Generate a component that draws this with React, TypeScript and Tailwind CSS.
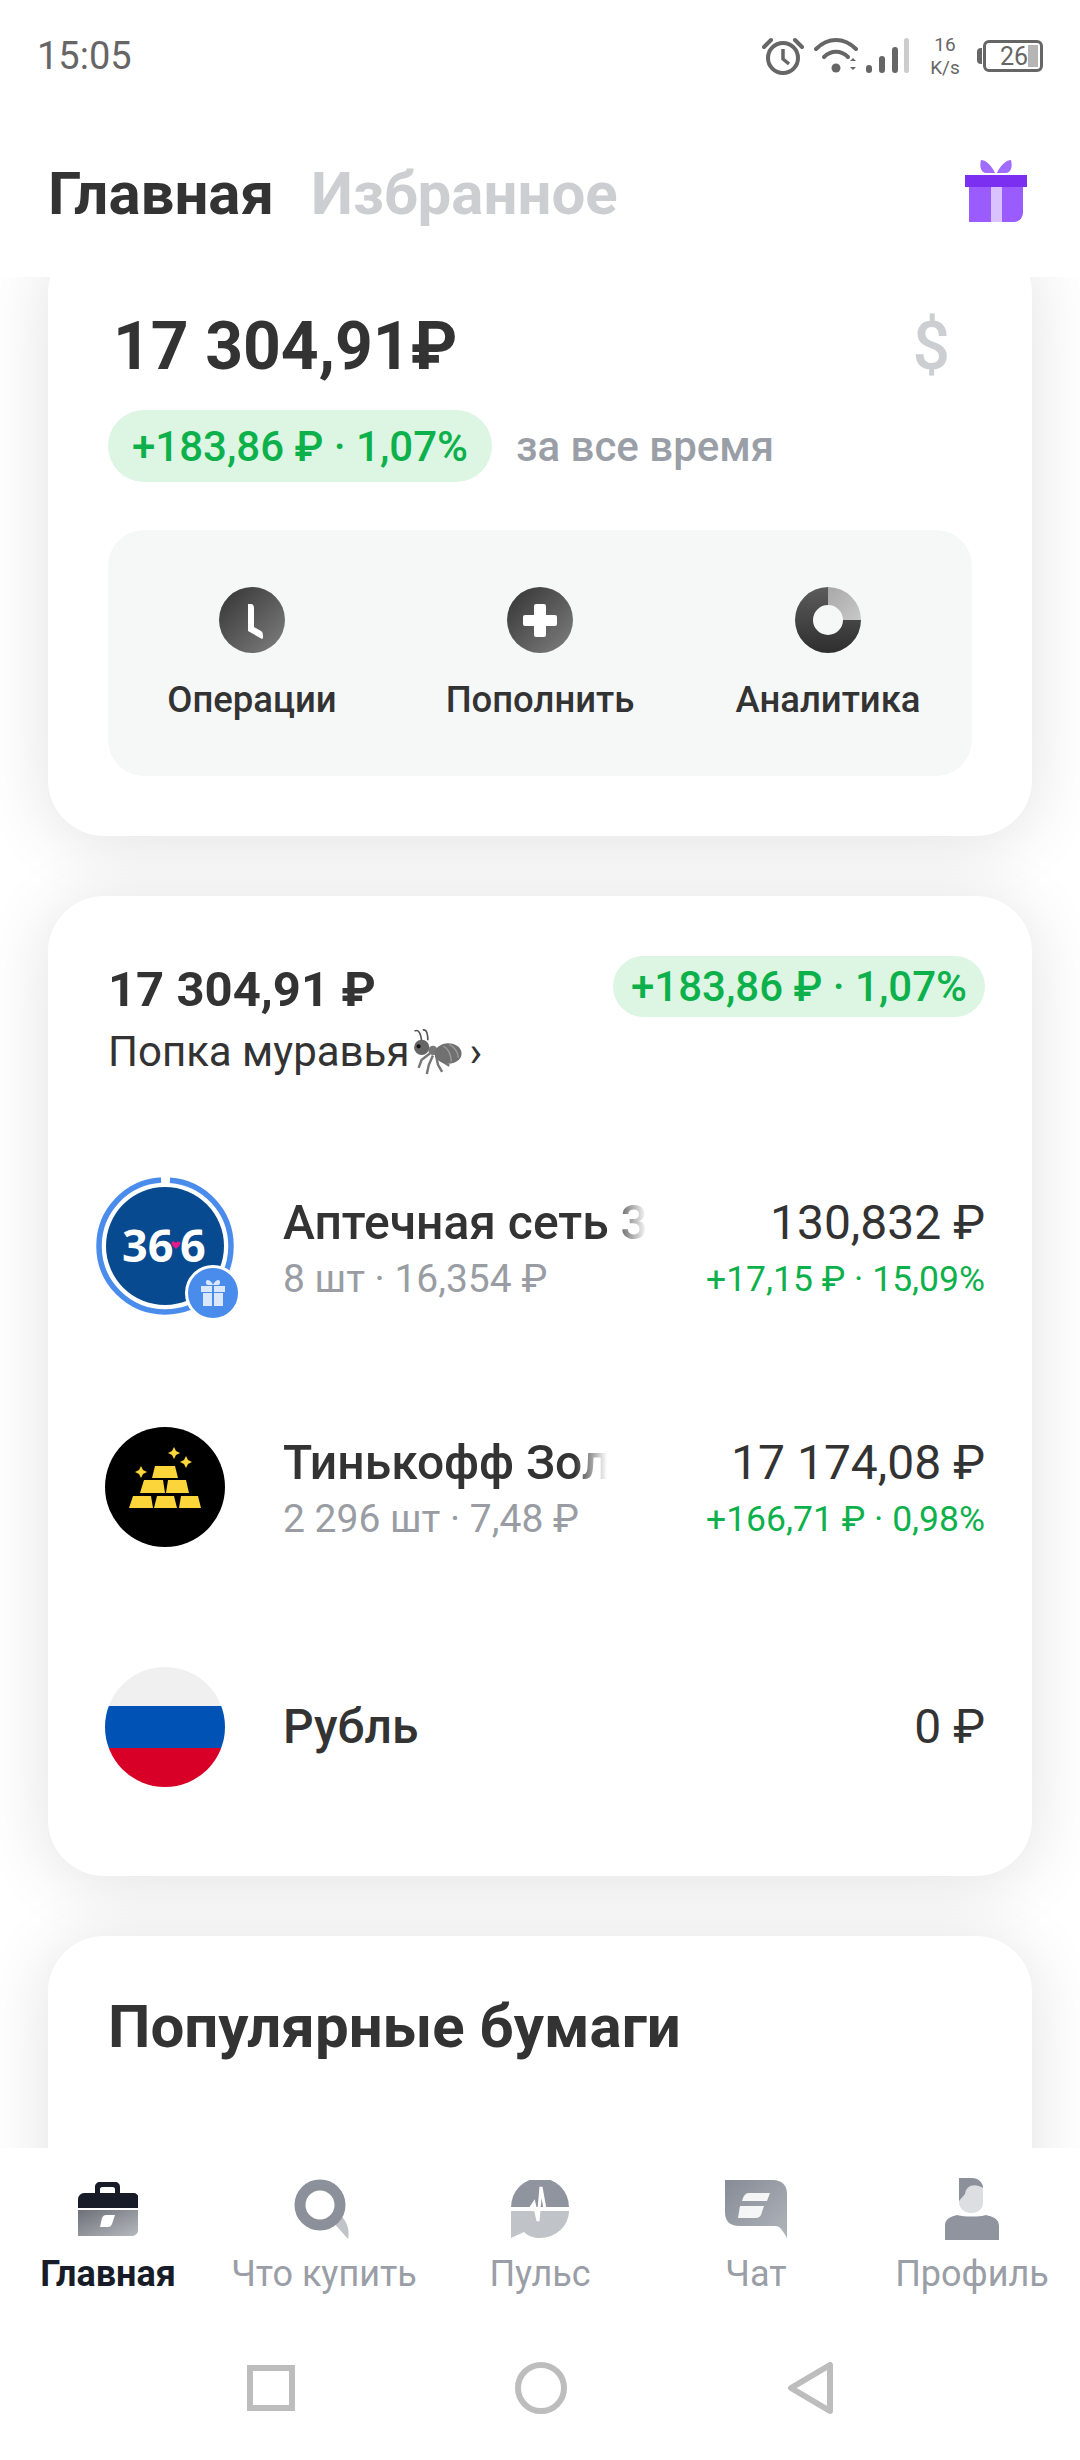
import React from "react";

function Alarm() {
  return (
    <svg width="42" height="40" viewBox="0 0 42 40" fill="none" stroke="#666" strokeWidth="4">
      <circle cx="21" cy="22" r="15" />
      <path d="M21 13v10l6 5" strokeWidth="3.5" />
      <path d="M2 11 9 4M40 11l-7-7" strokeLinecap="round" />
    </svg>
  );
}

function Wifi() {
  return (
    <svg width="96" height="38" viewBox="0 0 96 38" fill="none">
      <path d="M2 12C14 0 30 0 42 12" stroke="#666" strokeWidth="4" strokeLinecap="round" />
      <path d="M10 20c7-7 17-7 24 0" stroke="#666" strokeWidth="4" strokeLinecap="round" />
      <circle cx="22" cy="31" r="4.500" fill="#666" />
      <path d="M36 24l3-3 3 3zM36 30l3 3 3-3z" fill="#666" />
      <rect x="52" y="28" width="6" height="8" rx="3" fill="#666" />
      <rect x="65" y="19" width="6" height="17" rx="3" fill="#666" />
      <rect x="78" y="10" width="6" height="26" rx="3" fill="#666" />
      <rect x="90" y="1" width="5" height="35" rx="2.500" fill="#ccc" />
    </svg>
  );
}

function Gift() {
  return (
    <svg width="62" height="62" viewBox="0 0 62 62">
      <path d="M16 0c4 0 10 4 14 13h-9C17 13 14 8 16 0zM46 0c-4 0-10 4-14 13h9c4 0 7-5 5-13z" fill="#a06bff" />
      <path d="M4 26h54v26c0 6-4 10-9 10H4z" fill="#9b5cff" />
      <rect x="26" y="26" width="11" height="36" fill="#d9c2ff" />
      <rect x="0" y="15" width="62" height="12" fill="#7b2ff0" />
    </svg>
  );
}

function ClockBtn() {
  return (
    <svg width="66" height="66" viewBox="0 0 66 66">
      <defs>
        <linearGradient id="dk" x1="0" y1="0" x2="1" y2="1">
          <stop offset="0" stopColor="#333" />
          <stop offset="1" stopColor="#808080" />
        </linearGradient>
      </defs>
      <circle cx="33" cy="33" r="33" fill="url(#dk)" />
      <path d="M29 17h3c2 0 3 2 3 4v19l7 4c2 1 2 4 2 7l-1 1-14-8z" fill="#fff" />
    </svg>
  );
}

function PlusBtn() {
  return (
    <svg width="66" height="66" viewBox="0 0 66 66">
      <circle cx="33" cy="33" r="33" fill="url(#dk)" />
      <path d="M29 17h8a2 2 0 0 1 2 2v9h9a2 2 0 0 1 2 2v7a2 2 0 0 1-2 2h-9v9a2 2 0 0 1-2 2h-8a2 2 0 0 1-2-2v-9h-9a2 2 0 0 1-2-2v-7a2 2 0 0 1 2-2h9v-9a2 2 0 0 1 2-2z" fill="#fff" />
    </svg>
  );
}

function DonutBtn() {
  return (
    <svg width="66" height="66" viewBox="0 0 66 66">
      <defs>
        <linearGradient id="dn" x1="0" y1="1" x2="0" y2="0">
          <stop offset="0" stopColor="#2e2e2e" />
          <stop offset="1" stopColor="#5c5c5c" />
        </linearGradient>
        <linearGradient id="dl" x1="0" y1="0" x2="1" y2="1">
          <stop offset="0" stopColor="#a8a8a8" />
          <stop offset="1" stopColor="#c8c8c8" />
        </linearGradient>
      </defs>
      <path fillRule="evenodd" d="M33 0v18a15 15 0 1 0 15 15h18A33 33 0 1 1 33 0z" fill="url(#dn)" />
      <path d="M33 0a33 33 0 0 1 33 33H48a15 15 0 0 0-15-15z" fill="url(#dl)" />
    </svg>
  );
}

function Ant() {
  return (
    <svg width="54" height="47" viewBox="0 0 52 46" fill="none">
      <path d="M5 2c4-2 6 2 7 10M13 1c4-1 5 4 5 10" stroke="#555" strokeWidth="1.600" />
      <path d="M20 24 12 30l-3 8M23 26l-4 9-2 9M26 26l2 9 4 7M25 24l8 8 6 4" stroke="#777" strokeWidth="2.400" />
      <circle cx="12" cy="18" r="7.500" fill="#666" />
      <circle cx="9" cy="17" r="2" fill="#111" />
      <circle cx="23" cy="21" r="4.500" fill="#777" />
      <ellipse cx="38" cy="24" rx="13" ry="10" fill="#707070" />
      <path d="M33 17c4 1 8 8 8 15M39 15c4 2 8 7 9 13" stroke="#999" strokeWidth="1.500" />
    </svg>
  );
}

function PharmacyLogo() {
  return (
    <div className="relative h-[140px] w-[140px] shrink-0">
      <svg width="140" height="140" viewBox="0 0 140 140">
        <circle cx="69" cy="69" r="66" fill="none" stroke="#4a8ceb" strokeWidth="5.500" strokeDasharray="405 10" strokeDashoffset="-5" transform="rotate(-90 69 69)" />
        <circle cx="69" cy="69" r="59" fill="#074a8f" />
        <text x="26" y="85" fill="#fff" fontSize="45" fontWeight="700" fontFamily="'Open Sans', sans-serif">36</text>
        <text x="84" y="85" fill="#fff" fontSize="45" fontWeight="700" fontFamily="'Open Sans', sans-serif">6</text>
        <path d="M80 66c-2-3-6-1-4 2l4 4 4-4c2-3-2-5-4-2z" fill="#e8198b" />
      </svg>
      <div className="absolute right-[-5px] bottom-[-4px] flex h-[56px] w-[56px] items-center justify-center rounded-full border-[3px] border-white bg-[#4a8ceb]">
        <svg width="28" height="28" viewBox="0 0 28 28">
          <path d="M8 1c3 0 5 2 6 5h-5C7 6 6 3 8 1zM20 1c-3 0-5 2-6 5h5c2 0 3-3 1-5z" fill="#dbe7fb" />
          <path d="M2 7h11v6H2zM15 7h11v6H15zM4 14h9v13H4zM15 14h9v13h-9z" fill="#dbe7fb" />
        </svg>
      </div>
    </div>
  );
}

function GoldLogo() {
  return (
    <svg width="120" height="120" viewBox="0 0 120 120" className="shrink-0">
      <circle cx="60" cy="60" r="60" fill="#000" />
      <g fill="#fbd53a">
        <path d="M50 39h20l3 12H47z" />
        <path d="M39 53h19l2 13H35zM63 53h18l3 13H61z" />
        <path d="M28 69h18l2 12H24zM52 69h17l3 12H49zM76 69h17l3 12H74z" />
        <path d="M69 20l2 4 4 2-4 2-2 4-2-4-4-2 4-2z" />
        <path d="M81 29l2 4 4 2-4 2-2 4-2-4-4-2 4-2z" />
        <path d="M36 39l2 4 4 2-4 2-2 4-2-4-4-2 4-2z" />
      </g>
    </svg>
  );
}

function FlagLogo() {
  return (
    <div className="flex h-[120px] w-[120px] shrink-0 flex-col overflow-hidden rounded-full">
      <div className="h-[39px] bg-[#f0f0f0]" />
      <div className="h-[42px] bg-[#0052b4]" />
      <div className="h-[39px] bg-[#d80027]" />
    </div>
  );
}

function NavIcons({ name }: { name: string }) {
  if (name === "home") {
    return (
      <svg width="60" height="60" viewBox="0 0 60 60">
        <defs>
          <linearGradient id="hb" x1="0" y1="0" x2="1" y2="1">
            <stop offset="0" stopColor="#6d7078" />
            <stop offset="1" stopColor="#b5b8bd" />
          </linearGradient>
          <linearGradient id="gr" x1="0" y1="0" x2="1" y2="1">
            <stop offset="0" stopColor="#868b96" />
            <stop offset="1" stopColor="#b0b4ba" />
          </linearGradient>
        </defs>
        <path d="M17 14V8c0-3 2-5 5-5h15c3 0 5 2 5 5v6h-5V10c0-1-1-2-2-2H24c-1 0-2 1-2 2v4z" fill="#171c28" />
        <path d="M6 14h50c2 0 4 2 4 3v12H0V20c0-3 3-6 6-6z" fill="#171c28" />
        <path d="M0 31h60v20c0 4-3 6-7 6H0z" fill="url(#hb)" />
        <path d="M24 39c1-2 2-3 4-3h9l-3 9c-1 2-2 3-4 3h-8z" fill="#fff" />
      </svg>
    );
  }
  if (name === "search") {
    return (
      <svg width="60" height="60" viewBox="0 0 60 60">
        <path d="M38 42l8-7c7 8 10 15 8 25z" fill="#c0c3c8" />
        <circle cx="26" cy="26" r="20" fill="none" stroke="#8b909b" strokeWidth="11" />
      </svg>
    );
  }
  if (name === "pulse") {
    return (
      <svg width="58" height="58" viewBox="0 0 58 58">
        <path d="M0 27a29 29 0 0 1 58 0z" fill="#8f949e" />
        <path d="M0 31h58a29 27 0 0 1-29 27c-6 0-12-2-16-6L0 58z" fill="#c0c3c7" />
        <path d="M0 29h19l4-6 4 18 3-34 4 22h24" fill="none" stroke="#fff" strokeWidth="3" />
      </svg>
    );
  }
  if (name === "chat") {
    return (
      <svg width="62" height="58" viewBox="0 0 62 58">
        <path d="M0 0h48c8 0 14 5 14 13v45c-4-7-7-12-11-12H14C5 46 0 41 0 32z" fill="url(#gr)" />
        <path d="M18 18c1-3 3-5 6-5h21l-3 8H17zM15 26h24l-3 9c-1 2-3 3-5 3H13z" fill="#fff" opacity=".9" />
      </svg>
    );
  }
  return (
    <svg width="54" height="62" viewBox="0 0 54 62">
      <path d="M14 0h12c8 0 12 5 12 12v13c0 6-5 10-12 10S14 30 14 24z" fill="#dcdee1" />
      <path d="M14 0h12c8 0 12 5 12 10-8-5-17-3-18 6l-6 7z" fill="#8b909b" />
      <path d="M0 62V48c0-10 11-10 12-11 8 2 22 2 29 0 1 1 13 1 13 11v14z" fill="#8f949e" />
    </svg>
  );
}

const tabs = [
  { key: "home", label: "Главная", active: true },
  { key: "search", label: "Что купить" },
  { key: "pulse", label: "Пульс" },
  { key: "chat", label: "Чат" },
  { key: "profile", label: "Профиль" },
];

const actions = [
  { label: "Операции", icon: <ClockBtn /> },
  { label: "Пополнить", icon: <PlusBtn /> },
  { label: "Аналитика", icon: <DonutBtn /> },
];

export default function App() {
  return (
    <div className="flex h-[2460px] w-[1080px] flex-col overflow-hidden bg-white font-['Roboto',sans-serif] text-[#333]">
      {/* status bar */}
      <div className="flex h-[110px] shrink-0 items-center justify-between px-[37px] pt-[2px]">
        <span className="text-[38px] leading-none text-[#666]">15:05</span>
        <div className="ml-auto flex items-center">
          <Alarm />
          <div className="ml-[10px]"><Wifi /></div>
          <div className="ml-[17px] flex w-[36px] flex-col items-center text-[19px] leading-[23px] text-[#666]">
            <span>16</span>
            <span>K/s</span>
          </div>
          <div className="ml-[14px] flex items-center">
            <div className="h-[16px] w-[5px] rounded-l-sm bg-[#666]" />
            <div className="ml-[1px] flex h-[32px] w-[60px] items-center justify-end rounded-[6px] border-[3px] border-[#666] pr-[2px] text-[25px] leading-none text-[#666]">
              <span>26</span>
              <div className="h-[22px] w-[10px] bg-[#b5b5b5]" />
            </div>
          </div>
        </div>
      </div>

      {/* header */}
      <div className="flex h-[167px] shrink-0 items-start justify-between pt-[51px] pr-[53px] pl-[48px]">
        <div className="flex items-center gap-[37px] text-[60px] leading-[66px] font-bold">
          <span>Главная</span>
          <span className="text-[#ccced1]">Избранное</span>
        </div>
        <div className="mt-[-1px]"><Gift /></div>
      </div>

      {/* scrolling content */}
      <div className="flex min-h-0 flex-1 flex-col gap-[60px] overflow-hidden bg-white px-[48px]">
        <section className="mt-[-40px] h-[599px] shrink-0 rounded-[56px] bg-white px-[60px] shadow-[0_6px_70px_rgba(0,0,0,0.12)]">
          <div className="flex items-center justify-between pt-[70px] pr-[22px] pl-[5px]">
            <span className="text-[66px] leading-[80px] font-bold">17 304,91₽</span>
            <span className="text-[66px] leading-[80px] font-medium text-[#ccced1]">$</span>
          </div>
          <div className="mt-[23px] flex items-center">
            <span className="flex h-[72px] items-center rounded-full bg-[#dcf6e3] px-[24px] text-[42px] font-medium text-[#0db14b]">
              +183,86 ₽ · 1,07%
            </span>
            <span className="ml-[24px] text-[42px] font-medium text-[#9a9ea6]">за все время</span>
          </div>
          <div className="mt-[48px] grid h-[246px] grid-cols-3 rounded-[36px] bg-[#f6f8f7] pt-[57px]">
            {actions.map((a) => (
              <div key={a.label} className="flex flex-col items-center">
                {a.icon}
                <span className="mt-[25px] text-[36.5px] leading-[44px] font-medium text-[#333]">{a.label}</span>
              </div>
            ))}
          </div>
        </section>

        <section className="h-[980px] shrink-0 rounded-[56px] bg-white pr-[47px] pl-[60px] shadow-[0_6px_70px_rgba(0,0,0,0.12)]">
          <div className="flex items-start justify-between pt-[60px]">
            <div>
              <div className="mt-[6px] text-[49px] leading-[56px] font-bold">17 304,91 ₽</div>
              <div className="mt-[9px] flex items-center text-[42px] leading-[50px]">
                Попка муравья
                <Ant />
                <span className="ml-[6px] text-[42px]">›</span>
              </div>
            </div>
            <span className="flex h-[61px] items-center rounded-full bg-[#dcf6e3] px-[18px] text-[42px] font-medium text-[#0db14b]">
              +183,86 ₽ · 1,07%
            </span>
          </div>

          <div className="mt-[50px] flex h-[240px] items-center">
            <div className="ml-[-12px]"><PharmacyLogo /></div>
            <div className="ml-[47px] w-[364px] pt-[8px]">
              <div className="overflow-hidden text-[48px] leading-[56px] font-medium whitespace-nowrap [mask-image:linear-gradient(to_right,black_90%,transparent)]">Аптечная сеть 36,6</div>
              <div className="text-[39px] leading-[57px] text-[#999da3]">8 шт · 16,354 ₽</div>
            </div>
            <div className="ml-auto pt-[8px] text-right">
              <div className="text-[48px] leading-[56px]">130,832 ₽</div>
              <div className="text-[35.5px] leading-[57px] text-[#0db14b]">+17,15 ₽ · 15,09%</div>
            </div>
          </div>

          <div className="flex h-[240px] items-center">
            <div className="ml-[-3px]"><GoldLogo /></div>
            <div className="ml-[58px] w-[324px] pt-[8px]">
              <div className="overflow-hidden text-[48px] leading-[56px] font-medium whitespace-nowrap [mask-image:linear-gradient(to_right,black_90%,transparent)]">Тинькофф Золото</div>
              <div className="text-[39px] leading-[57px] text-[#999da3]">2 296 шт · 7,48 ₽</div>
            </div>
            <div className="ml-auto pt-[8px] text-right">
              <div className="text-[48px] leading-[56px]">17 174,08 ₽</div>
              <div className="text-[35.5px] leading-[57px] text-[#0db14b]">+166,71 ₽ · 0,98%</div>
            </div>
          </div>

          <div className="flex h-[240px] items-center">
            <div className="ml-[-3px]"><FlagLogo /></div>
            <div className="ml-[58px] text-[48px] font-medium">Рубль</div>
            <div className="ml-auto text-[48px]">0 ₽</div>
          </div>
        </section>

        <section className="h-[400px] shrink-0 rounded-[56px] bg-white px-[60px] pt-[53px] shadow-[0_6px_70px_rgba(0,0,0,0.12)]">
          <h2 className="text-[60px] leading-[76px] font-bold">Популярные бумаги</h2>
        </section>
      </div>

      {/* tab bar */}
      <nav className="grid h-[192px] shrink-0 grid-cols-5 bg-white pt-[26px]">
        {tabs.map((t) => (
          <div key={t.key} className="flex flex-col items-center">
            <div className="flex h-[70px] items-center"><NavIcons name={t.key} /></div>
            <span className={t.active ? "mt-[8px] text-[36px] leading-[44px] font-bold text-[#171c28]" : "mt-[8px] text-[36px] leading-[44px] text-[#9a9ea6]"}>
              {t.label}
            </span>
          </div>
        ))}
      </nav>

      {/* android buttons */}
      <div className="flex h-[120px] shrink-0 items-start justify-center gap-[220px] bg-white pt-[22px]">
        <div className="mt-[3px] h-[46px] w-[48px] border-[6px] border-[#bdbdbd]" />
        <div className="h-[52px] w-[52px] rounded-full border-[6px] border-[#bdbdbd]" />
        <svg width="46" height="52" viewBox="0 0 46 52" fill="none">
          <path d="M43 3v46L4 26z" stroke="#bdbdbd" strokeWidth="6" strokeLinejoin="round" />
        </svg>
      </div>
    </div>
  );
}
